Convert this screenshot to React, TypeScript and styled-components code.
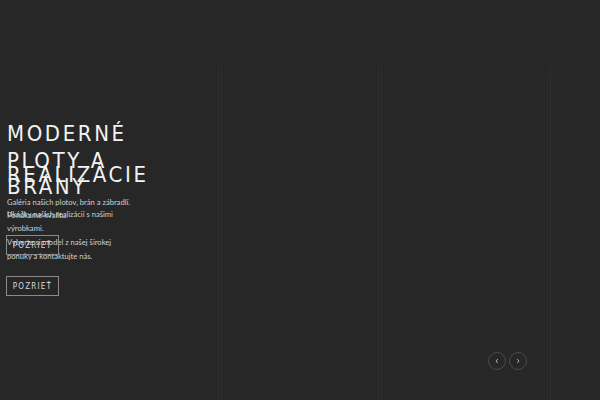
import React from "react";
import styled, { createGlobalStyle } from "styled-components";

const Global = createGlobalStyle`
  html, body { margin: 0; padding: 0; background: #272727; }
  body { width: 600px; height: 400px; overflow: hidden; }
  * { box-sizing: border-box; }
`;

const Stage = styled.div`
  width: 600px;
  height: 400px;
  display: grid;
  grid-template: 1fr / 1fr;
  background: #272727;
  overflow: hidden;
`;

const Columns = styled.div`
  grid-area: 1 / 1;
  display: grid;
  grid-template-columns: 222px 160px 169px 1fr;
  -webkit-mask-image: linear-gradient(to bottom, transparent 40px, #000 75px);
  mask-image: linear-gradient(to bottom, transparent 40px, #000 75px);
`;

const Column = styled.div<{ $last?: boolean }>`
  background: ${(p) =>
    p.$last
      ? "none"
      : "linear-gradient(to left, #2e2e2e 0 1px, transparent 1px 3px, #2c2c2c 3px 4px, transparent 4px)"};
`;

const Slide = styled.section<{ $top: number }>`
  grid-area: 1 / 1;
  display: flex;
  flex-direction: column;
  justify-content: center;
  align-items: flex-start;
  padding: ${(p) => p.$top}px 0 0 6px;
  pointer-events: none;
`;

const Heading = styled.h1`
  margin: 0 0 0 1px;
  font-family: "Liberation Sans Narrow", "DejaVu Sans Condensed", "Liberation Sans", sans-serif;
  font-weight: 400;
  font-size: 22px;
  line-height: 26.5px;
  letter-spacing: 2.6px;
  color: #f2f2f2;
  text-transform: uppercase;
  width: 150px;
`;

const Text = styled.div<{ $mt: number }>`
  margin-top: ${(p) => p.$mt}px;
  width: 130px;
  font-family: "Lato", "Noto Sans", sans-serif;
  font-size: 7.6px;
  line-height: 13.5px;
  color: #d0d0d0;
  padding-left: 1px;
  p { margin: 0; }
  p + p { margin-top: 13.5px; }
`;

const Button = styled.button<{ $mt: number }>`
  margin-top: ${(p) => p.$mt}px;
  width: 53px;
  height: 20px;
  background: transparent;
  border: 1px solid #8a8a8a;
  color: #d8d8d8;
  font-family: "Liberation Sans Narrow", "DejaVu Sans Condensed", sans-serif;
  font-size: 8px;
  letter-spacing: 1.2px;
  padding: 0;
  display: flex;
  align-items: center;
  justify-content: center;
`;

const Nav = styled.div`
  grid-area: 1 / 1;
  align-self: end;
  justify-self: start;
  display: flex;
  gap: 3px;
  margin: 0 0 30px 488px;
`;

const NavBtn = styled.button`
  width: 18px;
  height: 18px;
  border-radius: 50%;
  border: 1px solid #4a4a4a;
  background: transparent;
  display: flex;
  align-items: center;
  justify-content: center;
  padding: 0;
  color: #bdbdbd;
`;

const Chevron = ({ dir }: { dir: "l" | "r" }) => (
  <svg width="6" height="6" viewBox="0 0 6 6" fill="none" stroke="currentColor" strokeWidth="0.9">
    {dir === "l" ? <path d="M3.8 1 L2 3 L3.8 5" /> : <path d="M2.2 1 L4 3 L2.2 5" />}
  </svg>
);

export default function App() {
  return (
    <>
      <Global />
      <Stage>
        <Columns>
          <Column />
          <Column />
          <Column />
          <Column $last />
        </Columns>
        <Slide $top={17}>
          <Heading>Moderné ploty a brány</Heading>
          <Text $mt={-5}>
            <p>Galéria našich plotov, brán a zábradlí. Ponúkame kvalitu.</p>
            <p>Vyberte si model z našej širokej ponuky a kontaktujte nás.</p>
          </Text>
          <Button $mt={13}>POZRIEŤ</Button>
        </Slide>
        <Slide $top={17}>
          <Heading>Realizácie</Heading>
          <Text $mt={20}>
            <p>Ukážky našich realizácií s našimi výrobkami.</p>
          </Text>
          <Button $mt={0}>POZRIEŤ</Button>
        </Slide>
        <Nav>
          <NavBtn aria-label="Predchádzajúce"><Chevron dir="l" /></NavBtn>
          <NavBtn aria-label="Ďalšie"><Chevron dir="r" /></NavBtn>
        </Nav>
      </Stage>
    </>
  );
}
